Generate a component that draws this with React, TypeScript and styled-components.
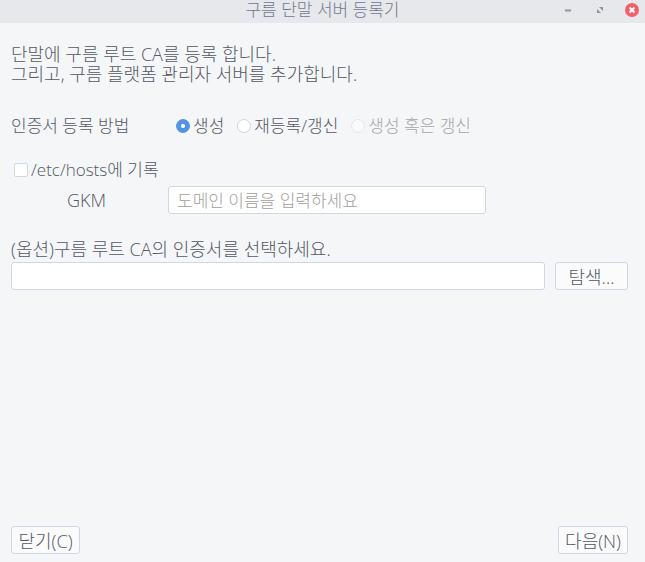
import React, { useState } from "react";
import styled, { createGlobalStyle } from "styled-components";

const GlobalStyle = createGlobalStyle`
  * { box-sizing: border-box; }
  html, body, #root { height: 100%; }
  body {
    margin: 0;
    background: #f5f6f8;
    color: #535864;
    font: 300 17px/20px "Open Sans", "Noto Sans CJK KR", sans-serif;
  }
  button, input { font: inherit; color: inherit; }
`;

const Window = styled.div`
  display: flex;
  flex-direction: column;
  min-height: 100%;
`;

const TitleBar = styled.header`
  display: grid;
  grid-template-columns: 1fr auto 1fr;
  align-items: center;
  height: 23px;
  padding-bottom: 4px;
  background: #e7e8eb;
  color: #717891;
`;

const Title = styled.h1`
  grid-column: 2;
  margin: 0;
  font-size: 17px;
  font-weight: 300;
`;

const WindowControls = styled.div`
  display: flex;
  justify-content: flex-end;
  gap: 16px;
  padding-right: 5px;
`;

const ControlButton = styled.button`
  display: flex;
  width: 16px;
  height: 16px;
  padding: 0;
  border: 0;
  background: none;
`;

const Content = styled.form`
  display: flex;
  flex: 1;
  flex-direction: column;
  padding: 21px 17px 8px 11px;
`;

const Intro = styled.p`
  margin: 0;
  font-size: 18px;
`;

const MethodRow = styled.div`
  display: flex;
  align-items: center;
  margin-top: 32px;
`;

const MethodLabel = styled.span`
  width: 165px;
`;

const Options = styled.div`
  display: flex;
  gap: 13px;
`;

const Choice = styled.label<{ $disabled?: boolean }>`
  display: flex;
  align-items: center;
  gap: 3px;
  color: ${(p) => (p.$disabled ? "#a4a6ac" : "inherit")};
`;

const Radio = styled.input`
  appearance: none;
  flex: none;
  width: 14px;
  height: 14px;
  margin: 0;
  border: 1px solid #cfd6e6;
  border-radius: 50%;
  background: #ffffff;
  &:checked {
    border-color: #5294e2;
    background: radial-gradient(circle, #ffffff 1.5px, #5294e2 2.5px);
  }
  &:disabled { opacity: 0.5; }
`;

const HostsChoice = styled(Choice)`
  align-self: flex-start;
  margin: 24px 0 0 3px;
`;

const Checkbox = styled.input`
  appearance: none;
  width: 14px;
  height: 14px;
  margin: 0;
  border: 1px solid #cfd6e6;
  border-radius: 2px;
  background: #ffffff;
  &:checked { border-color: #5294e2; background: #5294e2; }
`;

const DomainRow = styled.div`
  display: flex;
  align-items: center;
  margin-top: 6px;
`;

const DomainLabel = styled.label`
  width: 157px;
  padding-left: 56px;
  font-size: 18px;
`;

const TextInput = styled.input`
  flex: 1;
  min-width: 0;
  height: 28px;
  padding: 0 8px;
  border: 1px solid #cfd6e6;
  border-radius: 3px;
  outline: 0;
  background: #ffffff;
  &::placeholder { color: #a0a0a0; opacity: 1; }
  &:focus { border-color: #5294e2; }
`;

const DomainInput = styled(TextInput)`
  max-width: 318px;
`;

const FileLabel = styled.label`
  margin-top: 25px;
  font-size: 18px;
`;

const FileRow = styled.div`
  display: flex;
  gap: 10px;
  margin-top: 3px;
`;

const Button = styled.button`
  height: 28px;
  min-width: 69px;
  padding: 2px 6px 0;
  border: 1px solid #cfd6e6;
  border-radius: 3px;
  background: #fbfbfc;
  font-size: 18px;
  white-space: nowrap;
`;

const BrowseButton = styled(Button)`
  min-width: 73px;
`;

const Footer = styled.footer`
  display: flex;
  justify-content: space-between;
  margin-top: auto;
`;

const methods = [
  { id: "create", label: "생성" },
  { id: "renew", label: "재등록/갱신" },
  { id: "either", label: "생성 혹은 갱신", disabled: true },
];

export default function App() {
  const [method, setMethod] = useState("create");
  return (
    <Window>
      <GlobalStyle />
      <TitleBar>
        <Title>구름 단말 서버 등록기</Title>
        <WindowControls>
          <ControlButton type="button" aria-label="최소화">
            <svg width="16" height="16" viewBox="0 0 16 16">
              <path d="M5 7.5h6v2H5z" fill="#90949e" />
            </svg>
          </ControlButton>
          <ControlButton type="button" aria-label="최대화">
            <svg width="16" height="16" viewBox="0 0 16 16">
              <path d="M7 5h4v4zM5 7v4h4z" fill="#90949e" />
            </svg>
          </ControlButton>
          <ControlButton type="button" aria-label="창 닫기">
            <svg width="16" height="16" viewBox="0 0 16 16">
              <circle cx="8" cy="8" r="7" fill="#f25f6b" />
              <path d="M5.5 5.5l5 5m0-5l-5 5" stroke="#fff" strokeWidth="2" />
            </svg>
          </ControlButton>
        </WindowControls>
      </TitleBar>
      <Content onSubmit={(e) => e.preventDefault()}>
        <Intro>
          단말에 구름 루트 CA를 등록 합니다.
          <br />
          그리고, 구름 플랫폼 관리자 서버를 추가합니다.
        </Intro>
        <MethodRow role="radiogroup" aria-labelledby="method-label">
          <MethodLabel id="method-label">인증서 등록 방법</MethodLabel>
          <Options>
            {methods.map((m) => (
              <Choice key={m.id} $disabled={m.disabled}>
                <Radio
                  type="radio"
                  name="method"
                  value={m.id}
                  disabled={m.disabled}
                  checked={method === m.id}
                  onChange={() => setMethod(m.id)}
                />
                {m.label}
              </Choice>
            ))}
          </Options>
        </MethodRow>
        <HostsChoice>
          <Checkbox type="checkbox" />
          /etc/hosts에 기록
        </HostsChoice>
        <DomainRow>
          <DomainLabel htmlFor="domain">GKM</DomainLabel>
          <DomainInput id="domain" type="text" placeholder="도메인 이름을 입력하세요" />
        </DomainRow>
        <FileLabel htmlFor="certificate">(옵션)구름 루트 CA의 인증서를 선택하세요.</FileLabel>
        <FileRow>
          <TextInput id="certificate" type="text" />
          <BrowseButton type="button">탐색...</BrowseButton>
        </FileRow>
        <Footer>
          <Button type="button">닫기(C)</Button>
          <Button type="submit">다음(N)</Button>
        </Footer>
      </Content>
    </Window>
  );
}
